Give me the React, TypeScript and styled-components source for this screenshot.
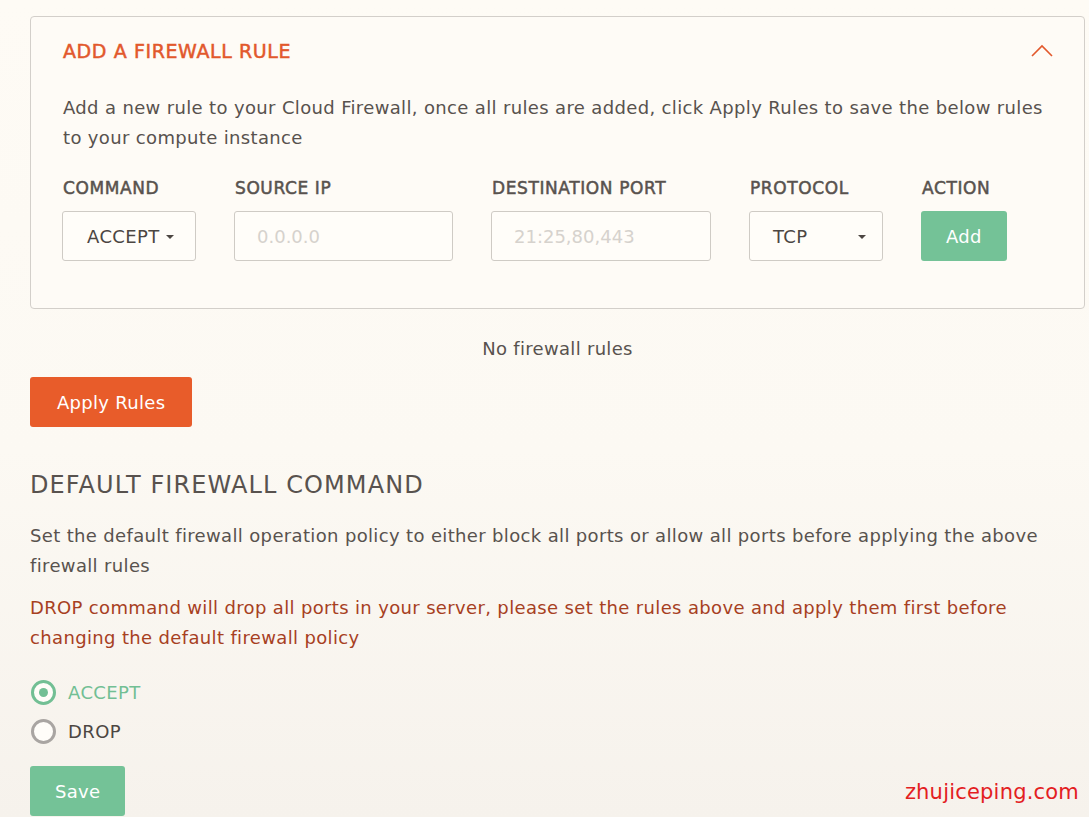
import React, { useState } from 'react';
import styled, { createGlobalStyle } from 'styled-components';

const GlobalStyle = createGlobalStyle`
    html, body {
        margin: 0;
        padding: 0;
    }
    body {
        background: linear-gradient(#fefbf5 0%, #fcf9f3 55%, #f6f2ec 100%);
        min-height: 817px;
        font-family: "DejaVu Sans", "Noto Sans", sans-serif;
        color: #58524e;
        overflow: hidden;
    }
`;

const Page = styled.div`
    width: 1055px;
    padding: 16px 4px 0 30px;
    position: relative;
    height: 801px;
`;

const Card = styled.section`
    border: 1px solid #d3cfca;
    border-radius: 4px;
    background: #fefbf6;
    padding: 20px 32px 47px 31px;
`;

const CardHeader = styled.div`
    display: flex;
    justify-content: space-between;
    align-items: center;
    height: 28px;
    padding-left: 1px;
`;

const CardTitle = styled.h2`
    margin: 0;
    font-size: 19px;
    font-weight: 400;
    -webkit-text-stroke: 0.5px currentColor;
    color: #e2582c;
    letter-spacing: 0.6px;
`;

const Chevron = styled.svg`
    width: 24px;
    height: 14px;
    margin-right: -2px;
`;

const Text = styled.p<{ tone?: 'warn' }>`
    margin: 0;
    font-size: 18px;
    line-height: 30px;
    color: ${p => (p.tone === 'warn' ? '#a7401f' : '#58524e')};
    letter-spacing: 0.35px;
`;

const Intro = styled(Text)`
    margin-top: 28px;
    padding-left: 1px;
`;

const FieldRow = styled.div`
    display: flex;
    gap: 38px;
    margin-top: 24px;
`;

const Field = styled.div<{ w: number }>`
    width: ${p => p.w}px;
    display: flex;
    flex-direction: column;
`;

const Label = styled.label`
    font-size: 17px;
    font-weight: 400;
    -webkit-text-stroke: 0.5px currentColor;
    text-transform: uppercase;
    color: #58524e;
    line-height: 22px;
    margin-bottom: 12px;
    padding-left: 1px;
    white-space: nowrap;
    letter-spacing: 0.6px;
`;

const Select = styled.div<{ spread?: boolean }>`
    height: 50px;
    box-sizing: border-box;
    border: 1px solid #cfcbc5;
    border-radius: 3px;
    background: #fffdf9;
    display: flex;
    align-items: center;
    justify-content: ${p => (p.spread ? 'space-between' : 'flex-start')};
    padding: ${p => (p.spread ? '0 16px 0 23px' : '0 0 0 24px')};
    font-size: 18px;
    letter-spacing: 0.4px;
    color: #4c4642;
    gap: 6px;
    overflow: hidden;
`;

const Caret = styled.span`
    flex: none;
    width: 0;
    height: 0;
    border-left: 4px solid transparent;
    border-right: 4px solid transparent;
    border-top: 4px solid #4c4642;
    margin-top: 1px;
`;

const Input = styled.input`
    height: 50px;
    box-sizing: border-box;
    border: 1px solid #cfcbc5;
    border-radius: 3px;
    background: #fffdf9;
    padding: 0 22px;
    font-family: inherit;
    font-size: 18px;
    color: #4c4642;
    width: 100%;
    &::placeholder {
        color: #d6d2cd;
    }
`;

const Button = styled.button<{ kind: 'green' | 'orange' }>`
    height: 50px;
    border: none;
    border-radius: 3px;
    padding: 0 25px;
    font-family: inherit;
    font-size: 18px;
    letter-spacing: 0.3px;
    color: #fff;
    background: ${p => (p.kind === 'green' ? '#74c297' : '#e85c2a')};
    cursor: pointer;
    align-self: flex-start;
`;

const WideButton = styled(Button)`
    padding: 0 27px;
`;

const Empty = styled.div`
    text-align: center;
    font-size: 18px;
    letter-spacing: 0.3px;
    color: #58524e;
    margin-top: 26px;
    line-height: 28px;
`;

const ApplyRow = styled.div`
    margin-top: 14px;
`;

const SectionTitle = styled.h3`
    margin: 43px 0 0;
    font-size: 24px;
    font-weight: 400;
    color: #58524e;
    line-height: 30px;
    letter-spacing: 1.1px;
`;

const Desc = styled(Text)`
    margin-top: 21px;
`;

const Warn = styled(Text)`
    margin-top: 12px;
`;

const RadioGroup = styled.div`
    margin-top: 25px;
    display: flex;
    flex-direction: column;
    gap: 10px;
`;

const RadioItem = styled.label<{ checked: boolean }>`
    display: flex;
    align-items: center;
    gap: 12px;
    font-size: 18px;
    letter-spacing: 0.4px;
    line-height: 29px;
    color: ${p => (p.checked ? '#72bf94' : '#4c4642')};
    cursor: pointer;
`;

const RadioDot = styled.span<{ checked: boolean }>`
    width: 25px;
    height: 25px;
    box-sizing: border-box;
    border-radius: 50%;
    border: 3px solid ${p => (p.checked ? '#72bf94' : '#a9a5a2')};
    background: #fffdf9;
    display: flex;
    align-items: center;
    justify-content: center;
    margin-left: 1px;
    &::after {
        content: '';
        width: 9px;
        height: 9px;
        border-radius: 50%;
        background: ${p => (p.checked ? '#72bf94' : 'transparent')};
    }
`;

const SaveRow = styled.div`
    margin-top: 20px;
`;

const Watermark = styled.span`
    position: absolute;
    right: 10px;
    bottom: 13px;
    font-family: "DejaVu Sans", sans-serif;
    font-size: 21px;
    color: #e3201f;
    letter-spacing: 0.2px;
`;

const fields = [
    { label: 'Source IP', w: 219, placeholder: '0.0.0.0' },
    { label: 'Destination Port', w: 220, placeholder: '21:25,80,443' },
];

export default function App() {
    const [policy, setPolicy] = useState<'ACCEPT' | 'DROP'>('ACCEPT');

    return (
        <>
            <GlobalStyle />
            <Page>
                <Card>
                    <CardHeader>
                        <CardTitle>ADD A FIREWALL RULE</CardTitle>
                        <Chevron viewBox="0 0 24 14">
                            <path d="M2 12 L12 2 L22 12" fill="none" stroke="#e2582c" strokeWidth="1.6" />
                        </Chevron>
                    </CardHeader>
                    <Intro>
                        Add a new rule to your Cloud Firewall, once all rules are added, click Apply Rules to save the below rules
                        to your compute instance
                    </Intro>
                    <FieldRow>
                        <Field w={134}>
                            <Label>Command</Label>
                            <Select>
                                ACCEPT<Caret />
                            </Select>
                        </Field>
                        {fields.map((f, key) => (
                            <Field w={f.w} key={key}>
                                <Label>{f.label}</Label>
                                <Input placeholder={f.placeholder} />
                            </Field>
                        ))}
                        <Field w={134}>
                            <Label>Protocol</Label>
                            <Select spread>
                                TCP<Caret />
                            </Select>
                        </Field>
                        <Field w={89}>
                            <Label>Action</Label>
                            <Button kind="green">Add</Button>
                        </Field>
                    </FieldRow>
                </Card>

                <Empty>No firewall rules</Empty>
                <ApplyRow>
                    <WideButton kind="orange">Apply Rules</WideButton>
                </ApplyRow>

                <SectionTitle>DEFAULT FIREWALL COMMAND</SectionTitle>
                <Desc>
                    Set the default firewall operation policy to either block all ports or allow all ports before applying the above
                    firewall rules
                </Desc>
                <Warn tone="warn">
                    DROP command will drop all ports in your server, please set the rules above and apply them first before
                    changing the default firewall policy
                </Warn>

                <RadioGroup>
                    {(['ACCEPT', 'DROP'] as const).map(o => (
                        <RadioItem key={o} checked={policy === o} onClick={() => setPolicy(o)}>
                            <RadioDot checked={policy === o} />
                            {o}
                        </RadioItem>
                    ))}
                </RadioGroup>
                <SaveRow>
                    <Button kind="green">Save</Button>
                </SaveRow>

                <Watermark>zhujiceping.com</Watermark>
            </Page>
        </>
    );
}
